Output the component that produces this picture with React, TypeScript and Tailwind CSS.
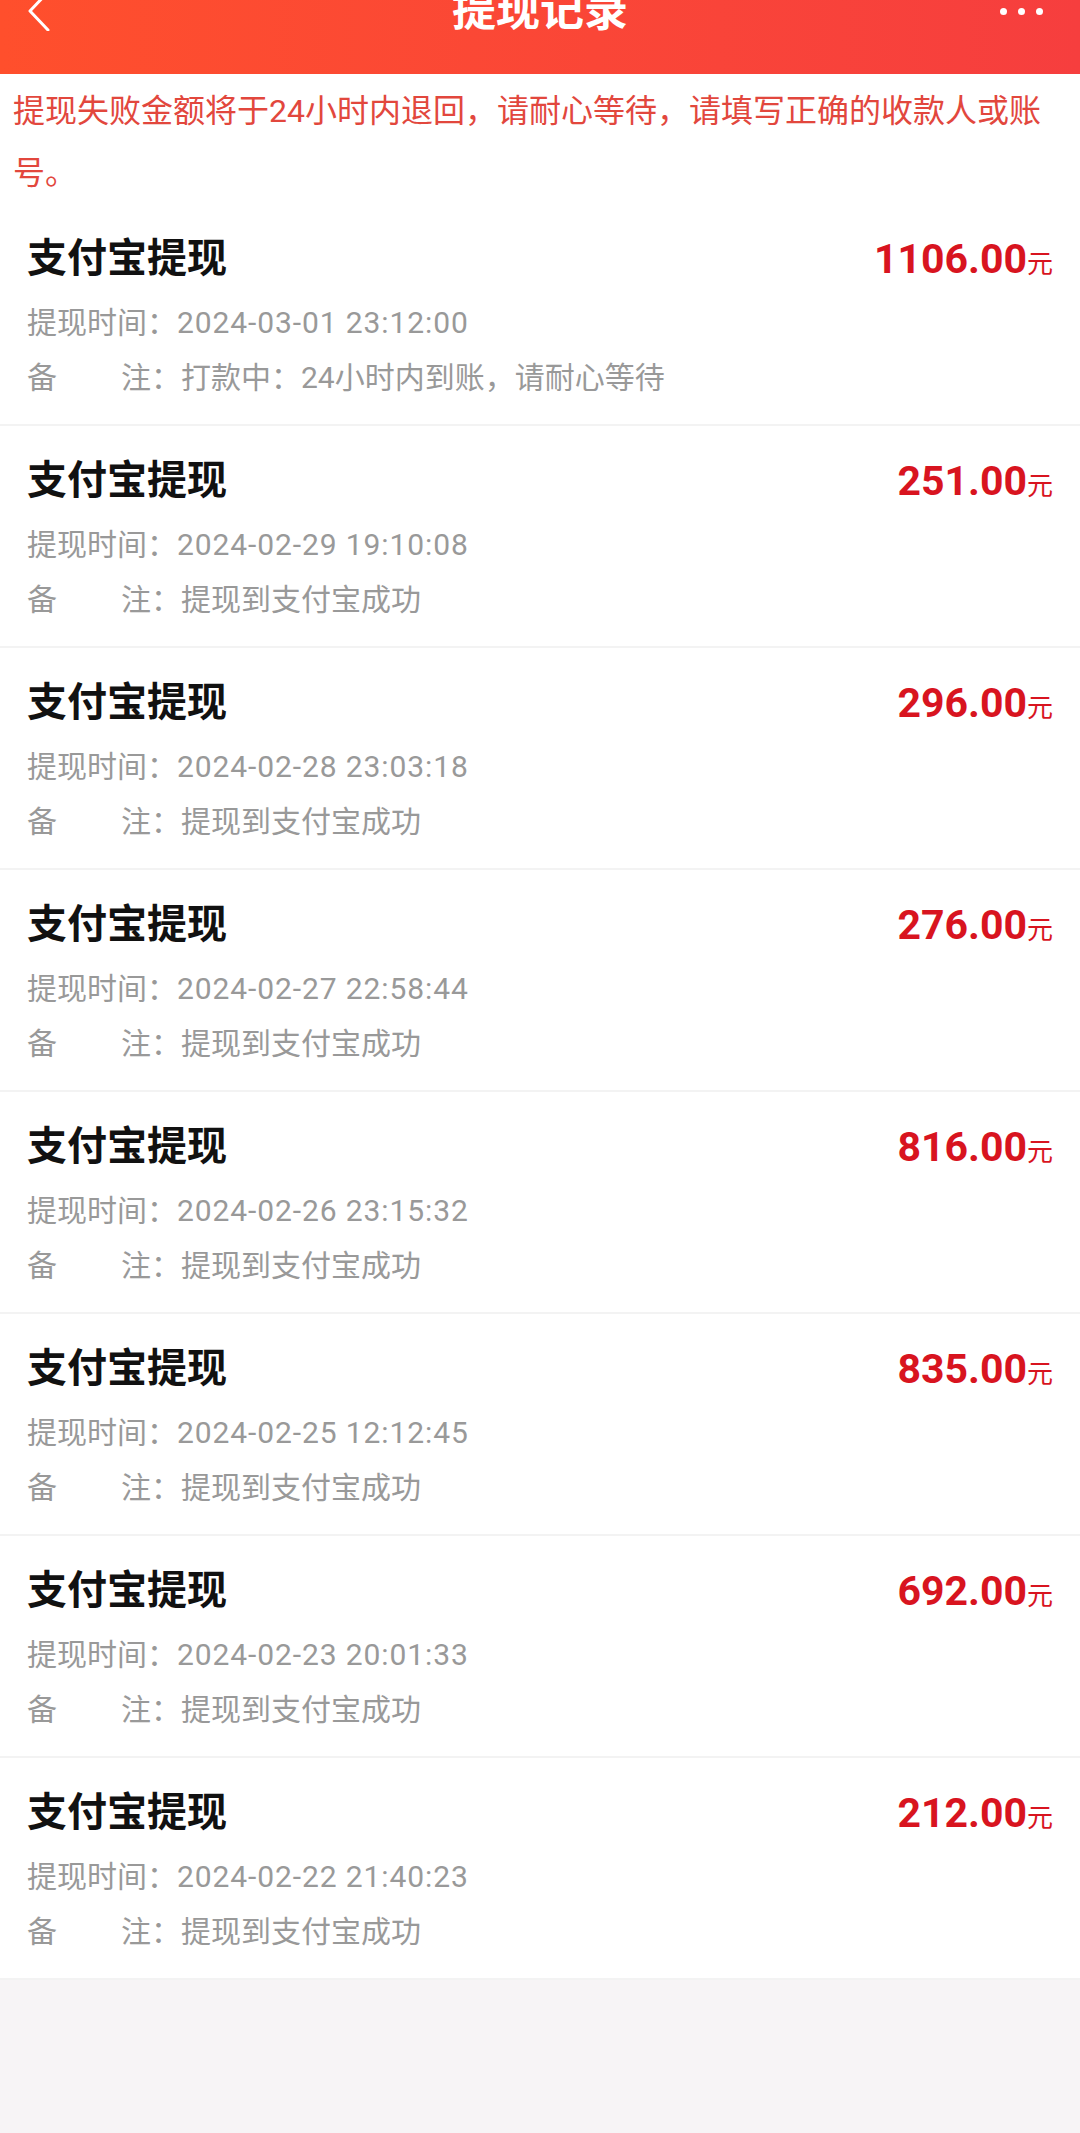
import React from 'react';

type Record = { amount: string; time: string; remark: string };

const records: Record[] = [
  { amount: '1106.00', time: '2024-03-01 23:12:00', remark: '打款中：24小时内到账，请耐心等待' },
  { amount: '251.00', time: '2024-02-29 19:10:08', remark: '提现到支付宝成功' },
  { amount: '296.00', time: '2024-02-28 23:03:18', remark: '提现到支付宝成功' },
  { amount: '276.00', time: '2024-02-27 22:58:44', remark: '提现到支付宝成功' },
  { amount: '816.00', time: '2024-02-26 23:15:32', remark: '提现到支付宝成功' },
  { amount: '835.00', time: '2024-02-25 12:12:45', remark: '提现到支付宝成功' },
  { amount: '692.00', time: '2024-02-23 20:01:33', remark: '提现到支付宝成功' },
  { amount: '212.00', time: '2024-02-22 21:40:23', remark: '提现到支付宝成功' },
];

const font = { fontFamily: "Roboto, 'Noto Sans CJK SC', sans-serif" };

function Header() {
  return (
    <header className="h-[74px] overflow-hidden bg-gradient-to-r from-[#ff4f2c] to-[#f63e3e] text-white">
      <div className="flex h-[22px] items-center px-[27px]">
        <div className="flex w-[120px] items-center">
          <svg width="24" height="40" viewBox="0 0 24 40" fill="none" className="shrink-0">
            <polyline points="21,1 3,20 21,39" stroke="white" strokeWidth="3" strokeLinecap="round" strokeLinejoin="round" />
          </svg>
        </div>
        <h1 className="flex-1 text-center text-[44px] font-bold leading-none">提现记录</h1>
        <div className="flex w-[120px] items-center justify-end gap-[11px] pr-[10px]">
          <span className="size-[7px] rounded-full bg-white" />
          <span className="size-[7px] rounded-full bg-white" />
          <span className="size-[7px] rounded-full bg-white" />
        </div>
      </div>
    </header>
  );
}

function RecordItem({ item }: { item: Record }) {
  return (
    <div className="border-b-2 border-[#f3f3f3] bg-white px-[27px] pb-[19px] pt-[30px]">
      <div className="flex h-[50px] items-center justify-between">
        <span className="text-[40px] font-bold leading-none text-[#111]">支付宝提现</span>
        <span className="flex items-baseline text-[#d8141f]">
          <span className="text-[41px] font-bold leading-none">{item.amount}</span>
          <span className="text-[26px] leading-none">元</span>
        </span>
      </div>
      <div className="mt-[11px] text-[30px] leading-[55px] text-[#999]">
        <div className="flex">
          <span>提现时间：</span>
          <span className="tracking-[0.9px]">{item.time}</span>
        </div>
        <div className="flex">
          <span className="inline-block w-[124px] [text-align-last:justify]">备注</span>
          <span>：{item.remark}</span>
        </div>
      </div>
    </div>
  );
}

export default function App() {
  return (
    <div className="min-h-screen bg-[#f7f4f6]" style={font}>
      <Header />
      <p className="bg-white pl-[13px] pr-[20px] pt-[6px] text-[32px] leading-[62px] text-[#e2473d]">
        提现失败金额将于24小时内退回，请耐心等待，请填写正确的收款人或账号。
      </p>
      <div>
        {records.map((r) => (
          <RecordItem key={r.time} item={r} />
        ))}
      </div>
    </div>
  );
}
